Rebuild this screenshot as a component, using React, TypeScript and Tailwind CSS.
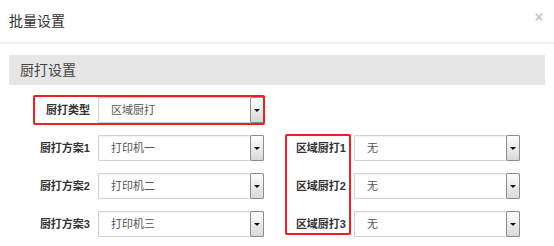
import React from "react"

const font = { fontFamily: '"Liberation Sans", "Noto Sans CJK SC", sans-serif' }

function Select({ value }: { value: string }) {
  return (
    <div className="flex h-[26px] w-[166px] border border-[#d4d4d4] bg-white shadow-[inset_0_1px_2px_rgba(0,0,0,0.06)]">
      <div className="flex flex-1 items-center pl-[12px] text-[11px] text-[#555]">{value}</div>
      <div className="-my-px -mr-px flex w-[14px] items-center justify-center rounded-[2px] border border-[#8c8c8c] bg-gradient-to-b from-white to-[#d9d9d9]">
        <div className="h-0 w-0 border-x-[3px] border-t-[3px] border-x-transparent border-t-[#111]" />
      </div>
    </div>
  )
}

function Field({ label, value }: { label: string; value: string }) {
  return (
    <div className="flex items-center">
      <div className="w-[80px] text-right text-[11px] font-bold text-[#333]">{label}</div>
      <div className="ml-2">
        <Select value={value} />
      </div>
    </div>
  )
}

export default function App() {
  return (
    <div className="relative h-[246px] w-[554px] overflow-hidden bg-white" style={font}>
      {/* Header */}
      <div className="flex h-[44px] items-center justify-between border-b-2 border-[#eee] pl-[9px] pr-[11px]">
        <span className="text-[14px] text-[#333]">批量设置</span>
        <span className="-mt-[8px] text-[14px] font-bold leading-none text-[#c4c4c4]">×</span>
      </div>

      {/* Body */}
      <div className="px-[9px] pt-[11px]">
        <div className="flex h-[30px] items-center bg-[#e6e6e6] pl-[11px] text-[14px] text-[#444]">厨打设置</div>

        <div className="mt-[12px] flex flex-col gap-[12px] pl-px">
          <div className="flex">
            <Field label="厨打类型" value="区域厨打" />
          </div>
          {[
            ["厨打方案1", "打印机一", "区域厨打1"],
            ["厨打方案2", "打印机二", "区域厨打2"],
            ["厨打方案3", "打印机三", "区域厨打3"],
          ].map(([l, v, r]) => (
            <div key={l} className="flex gap-[2px]">
              <Field label={l} value={v} />
              <Field label={r} value="无" />
            </div>
          ))}
        </div>
      </div>

      {/* Annotation boxes */}
      <div className="pointer-events-none absolute left-[33px] top-[95px] h-[30px] w-[232px] rounded-[2px] border-2 border-[#f01f1f]" />
      <div className="pointer-events-none absolute left-[285px] top-[134px] h-[101px] w-[66px] rounded-[2px] border-2 border-[#f01f1f]" />
    </div>
  )
}
